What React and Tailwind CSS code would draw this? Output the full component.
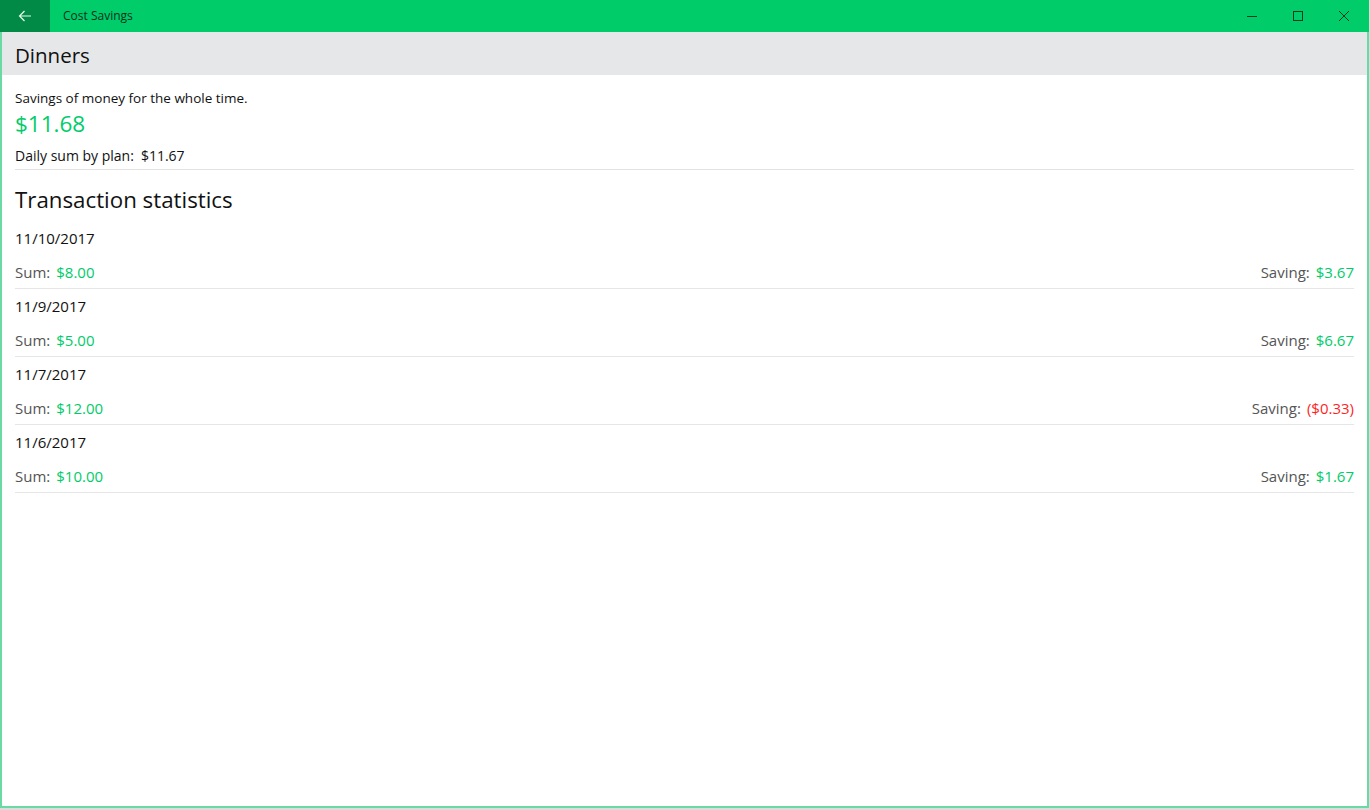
import React from 'react';

const rows = [
  { date: '11/10/2017', sum: '$8.00', saving: '$3.67', neg: false },
  { date: '11/9/2017', sum: '$5.00', saving: '$6.67', neg: false },
  { date: '11/7/2017', sum: '$12.00', saving: '($0.33)', neg: true },
  { date: '11/6/2017', sum: '$10.00', saving: '$1.67', neg: false },
];

function TitleBar() {
  return (
    <div className="flex h-8 items-stretch bg-[#00cc6a]">
      <div className="flex w-[50px] items-center justify-center bg-[#008a46]">
        <svg width="14" height="12" viewBox="0 0 14 12" fill="none" stroke="#e8f7ee" strokeWidth="1.2">
          <path d="M13 6H1.5M6.5 1L1.5 6l5 5" />
        </svg>
      </div>
      <div className="flex flex-1 items-center pl-[13px] text-[12px] text-[#06311b]">Cost Savings</div>
      <div className="flex items-center text-[#0b3b22]">
        <div className="flex w-[46px] justify-center">
          <svg width="12" height="12" viewBox="0 0 12 12" stroke="currentColor" strokeWidth="1">
            <path d="M1 6.5h10" />
          </svg>
        </div>
        <div className="flex w-[46px] justify-center">
          <svg width="12" height="12" viewBox="0 0 12 12" fill="none" stroke="currentColor" strokeWidth="1">
            <rect x="1.5" y="1.5" width="9" height="9" />
          </svg>
        </div>
        <div className="flex w-[46px] justify-center">
          <svg width="12" height="12" viewBox="0 0 12 12" stroke="currentColor" strokeWidth="1">
            <path d="M1 1l10 10M11 1L1 11" />
          </svg>
        </div>
        <div className="w-[2px]" />
      </div>
    </div>
  );
}

export default function App() {
  return (
    <div className="h-[810px] w-[1370px] overflow-hidden bg-[#dcdcdc] font-['Open_Sans',sans-serif]">
      <div className="flex h-[808px] w-[1369px] flex-col bg-white">
        <TitleBar />
        <div className="flex flex-1 flex-col border-x-2 border-b-2 border-[#6ad9a3]">
          <div className="flex h-[43px] items-center bg-[#e6e7e8] pl-[13px] pt-[3px] text-[20.5px] text-[#111]">Dinners</div>
          <div className="flex flex-col px-[13px]">
            <div className="pt-[13px] text-[13.5px] leading-[20px] text-[#111]">Savings of money for the whole time.</div>
            <div className="text-[22.5px] leading-[32px] text-[#00cc6a]">$11.68</div>
            <div className="flex gap-[7px] pt-[6px] text-[14px] leading-[20px] text-[#111]">
              <span>Daily sum by plan:</span>
              <span>$11.67</span>
            </div>
            <div className="mt-[3px] h-px bg-[#e2e2e2]" />
            <div className="pt-[14px] text-[22.3px] leading-[31px] text-[#111]">Transaction statistics</div>
            <div className="flex flex-col pt-[6px]">
              {rows.map((r) => (
                <div key={r.date} className="flex flex-col border-b border-[#e6e6e6]">
                  <div className="flex h-[35px] items-center text-[15px] text-[#111]">{r.date}</div>
                  <div className="flex h-[32px] items-center justify-between text-[15px]">
                    <div className="flex gap-[6px]">
                      <span className="text-[#555]">Sum:</span>
                      <span className="text-[#00cc6a]">{r.sum}</span>
                    </div>
                    <div className="flex gap-[6px]">
                      <span className="text-[#555]">Saving:</span>
                      <span className={r.neg ? 'text-[#ff1f1f]' : 'text-[#00cc6a]'}>{r.saving}</span>
                    </div>
                  </div>
                </div>
              ))}
            </div>
          </div>
        </div>
      </div>
    </div>
  );
}
